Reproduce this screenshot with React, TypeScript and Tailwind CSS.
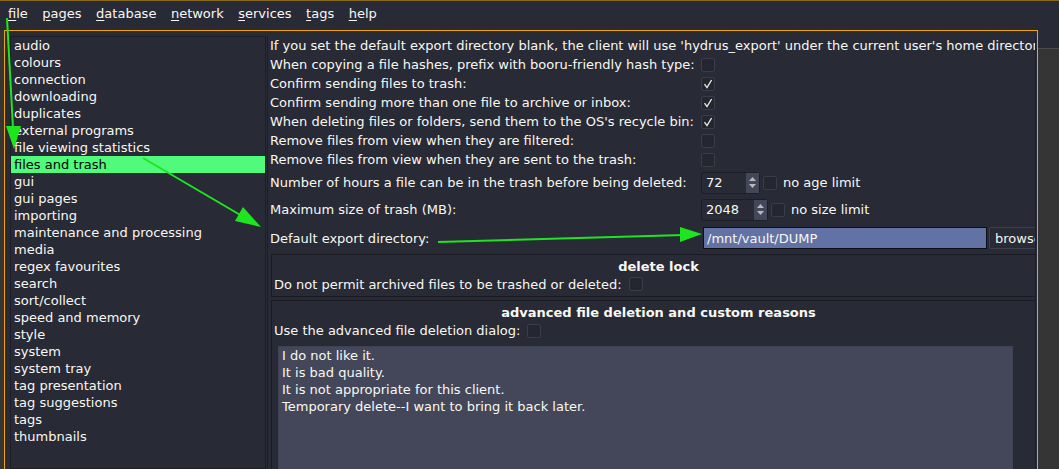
import React from 'react';

const font = { fontFamily: '"DejaVu Sans", "Liberation Sans", sans-serif' };

const menus = ['file', 'pages', 'database', 'network', 'services', 'tags', 'help'];

const pages = [
  'audio',
  'colours',
  'connection',
  'downloading',
  'duplicates',
  'external programs',
  'file viewing statistics',
  'files and trash',
  'gui',
  'gui pages',
  'importing',
  'maintenance and processing',
  'media',
  'regex favourites',
  'search',
  'sort/collect',
  'speed and memory',
  'style',
  'system',
  'system tray',
  'tag presentation',
  'tag suggestions',
  'tags',
  'thumbnails',
];

const checkRows: [string, boolean][] = [
  ['When copying a file hashes, prefix with booru-friendly hash type:', false],
  ['Confirm sending files to trash:', true],
  ['Confirm sending more than one file to archive or inbox:', true],
  ["When deleting files or folders, send them to the OS's recycle bin:", true],
  ['Remove files from view when they are filtered:', false],
  ['Remove files from view when they are sent to the trash:', false],
];

const reasons = [
  'I do not like it.',
  'It is bad quality.',
  'It is not appropriate for this client.',
  'Temporary delete--I want to bring it back later.',
];

function Check({ checked }: { checked?: boolean }) {
  return (
    <div className="w-[14px] h-[14px] shrink-0 border border-[#3a3c49] bg-[#252630] rounded-[2px] flex items-center justify-center">
      {checked ? (
        <svg width="10" height="10" viewBox="0 0 10 10">
          <path d="M1.5 5.2 L4 8.6 L8.6 1" stroke="#e8e8e4" strokeWidth="1.4" fill="none" />
        </svg>
      ) : null}
    </div>
  );
}

function Spin({ value, width }: { value: string; width: string }) {
  return (
    <div className={`${width} h-[22px] flex border border-[#1d1e26] rounded-[3px] bg-[#282a36]`}>
      <div className="flex-1 pl-[4px] flex items-center">{value}</div>
      <div className="w-[13px] bg-[#44475a] flex flex-col items-center justify-center gap-[3px]">
        <svg width="7" height="4" viewBox="0 0 7 4">
          <path d="M0 4 L3.5 0 L7 4 Z" fill="#b8b9c0" />
        </svg>
        <svg width="7" height="4" viewBox="0 0 7 4">
          <path d="M0 0 L3.5 4 L7 0 Z" fill="#b8b9c0" />
        </svg>
      </div>
    </div>
  );
}

export default function App() {
  return (
    <div className="relative w-[1059px] h-[469px] overflow-hidden bg-[#353535] text-[13px] leading-[17px] text-[#f8f8f2]" style={font}>
      {/* menu bar */}
      <div className="h-[30px] bg-[#282a36] border-t border-[#8a6a1a] flex gap-[14.5px] pl-[8px] pt-[4px]">
        {menus.map((m) => (
          <span key={m}>
            <span className="underline underline-offset-[2px]">{m[0]}</span>
            {m.slice(1)}
          </span>
        ))}
      </div>

      <div className="flex h-[439px]">
        <div className="w-[4px] bg-[#353535]" />

        {/* dialog window */}
        <div className="w-[1034px] border-l border-r border-t border-[#f5a300] bg-[#282a36] flex pt-[5px]">
          <div className="w-[5px]" />

          {/* page list */}
          <div className="w-[256px] border border-[#1d1e27] bg-[#282a36]">
            {pages.map((p) =>
              p === 'files and trash' ? (
                <div key={p} className="h-[17px] bg-[#50fa7b] text-black pl-[3px]">
                  {p}
                </div>
              ) : (
                <div key={p} className="h-[17px] pl-[3px]">
                  {p}
                </div>
              ),
            )}
          </div>

          {/* right scroll area */}
          <div className="ml-[1px] w-[769px] border-l border-r border-[#1d1e27] overflow-hidden pl-[2px]">
            <div className="w-[780px]">
              <div className="h-[19px] flex items-center whitespace-nowrap">
                If you set the default export directory blank, the client will use 'hydrus_export' under the current user's home directory.
              </div>

              {checkRows.map(([label, on]) => (
                <div key={label} className="h-[19px] flex items-center whitespace-nowrap">
                  <div className="w-[431px]">{label}</div>
                  <Check checked={on} />
                </div>
              ))}

              <div className="h-[27px] flex items-center whitespace-nowrap">
                <div className="w-[431px]">Number of hours a file can be in the trash before being deleted:</div>
                <Spin value="72" width="w-[59px]" />
                <div className="ml-[3px]">
                  <Check />
                </div>
                <span className="ml-[6px]">no age limit</span>
              </div>

              <div className="h-[27px] flex items-center whitespace-nowrap">
                <div className="w-[431px]">Maximum size of trash (MB):</div>
                <Spin value="2048" width="w-[67px]" />
                <div className="ml-[3px]">
                  <Check />
                </div>
                <span className="ml-[6px]">no size limit</span>
              </div>

              <div className="h-[30px] flex items-center whitespace-nowrap">
                <div className="w-[433px]">Default export directory:</div>
                <div className="w-[284px] h-[22px] border border-[#0e0f14] bg-[#6272a4] pl-[3px] flex items-center">
                  /mnt/vault/DUMP
                </div>
                <div className="ml-[2px] h-[22px] border border-[#3d3f4c] rounded-[2px] px-[5px] flex items-center">
                  browse
                </div>
              </div>

              {/* delete lock */}
              <div className="ml-[1px] mt-[1px] w-[775px] h-[43px] border border-[#1a1b22] pt-[3px]">
                <div className="h-[17px] text-center font-bold">delete lock</div>
                <div className="h-[18px] flex items-center pl-[2px] gap-[7px]">
                  <span>Do not permit archived files to be trashed or deleted:</span>
                  <Check />
                </div>
              </div>

              {/* advanced deletion */}
              <div className="ml-[1px] mt-[3px] w-[775px] h-[200px] border border-[#1a1b22] pt-[3px]">
                <div className="h-[17px] text-center font-bold">advanced file deletion and custom reasons</div>
                <div className="h-[19px] flex items-center pl-[2px] gap-[7px]">
                  <span>Use the advanced file deletion dialog:</span>
                  <Check />
                </div>
                <div className="ml-[6px] mt-[6px] w-[735px] h-[150px] bg-[#44475a] border border-[#3f4253] pl-[3px]">
                  {reasons.map((r) => (
                    <div key={r} className="h-[17px]">
                      {r}
                    </div>
                  ))}
                </div>
              </div>
            </div>
          </div>
          <div className="w-[1px]" />
        </div>

        {/* behind window */}
        <div className="w-[21px] flex flex-col">
          <div className="h-[18px] bg-[#282a36]" />
          <div className="h-[1px] bg-[#4a4a4a]" />
          <div className="flex-1 bg-[#353535]" />
        </div>
      </div>

      {/* annotation arrows */}
      <svg className="absolute inset-0 pointer-events-none" width="1059" height="469" viewBox="0 0 1059 469">
        <g stroke="#1ee61e" strokeWidth="2" fill="none">
          <line x1="7" y1="18" x2="13" y2="128" />
          <line x1="143" y1="158" x2="242" y2="216" />
          <line x1="438" y1="242" x2="684" y2="235" />
        </g>
        <g fill="#1ee61e">
          <polygon points="14,149 6,126 21,126" />
          <polygon points="261,227 235,221 243,207" />
          <polygon points="702,234 680,227 680,242" />
        </g>
      </svg>
    </div>
  );
}
